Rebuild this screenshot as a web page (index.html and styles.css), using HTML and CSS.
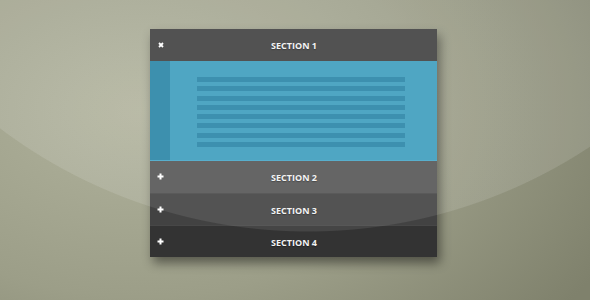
FILE: index.html
```html
<!DOCTYPE html>
<html lang="en">
<head>
  <meta charset="UTF-8">
  <title>Accordion</title>
  <link rel="stylesheet" href="styles.css">
</head>
<body>
  <div class="stage">
    <div class="accordion">
      <div class="section open">
        <div class="section-head">
          <svg class="icon" viewBox="0 0 6 6"><path d="M1 1 L5 5 M5 1 L1 5" stroke="#fff" stroke-width="1.8"/></svg>
          <span>SECTION 1</span>
        </div>
        <div class="section-body">
          <div class="strip"></div>
          <div class="lines">
            <div class="line"></div>
            <div class="line"></div>
            <div class="line"></div>
            <div class="line"></div>
            <div class="line"></div>
            <div class="line"></div>
            <div class="line"></div>
            <div class="line"></div>
          </div>
        </div>
      </div>
      <div class="section s2">
        <div class="section-head">
          <svg class="icon plus" viewBox="0 0 7 7"><path d="M3.5 0.5 V6.5 M0.5 3.5 H6.5" stroke="#fff" stroke-width="2"/></svg>
          <span>SECTION 2</span>
        </div>
      </div>
      <div class="section s3">
        <div class="section-head">
          <svg class="icon plus" viewBox="0 0 7 7"><path d="M3.5 0.5 V6.5 M0.5 3.5 H6.5" stroke="#fff" stroke-width="2"/></svg>
          <span>SECTION 3</span>
        </div>
      </div>
      <div class="section s4">
        <div class="section-head">
          <svg class="icon plus" viewBox="0 0 7 7"><path d="M3.5 0.5 V6.5 M0.5 3.5 H6.5" stroke="#fff" stroke-width="2"/></svg>
          <span>SECTION 4</span>
        </div>
      </div>
    </div>
  </div>
</body>
</html>
```

FILE: styles.css
```css
html, body {
  margin: 0;
  height: 100%;
}

body {
  font-family: 'Open Sans', 'DejaVu Sans', sans-serif;
  background:
    radial-gradient(circle 512px at 308px -280px, rgba(255,255,255,0.035) 0, rgba(255,255,255,0.035) 99.8%, rgba(255,255,255,0) 100%),
    radial-gradient(ellipse 520px 340px at 140px 110px, #b0b29c 0%, #9c9e88 55%, #7f816c 100%);
  background-color: #8c8e78;
  overflow: hidden;
}

/* glossy arc laid over the whole scene */
body::after {
  content: '';
  position: fixed;
  left: 0;
  top: 0;
  right: 0;
  bottom: 0;
  pointer-events: none;
  background: radial-gradient(circle 512px at 308px -280px, rgba(255,255,255,0.09) 0, rgba(255,255,255,0.09) 99.8%, rgba(255,255,255,0) 100%);
}

.stage {
  padding: 29px 0 0 150px;
}

.accordion {
  width: 287px;
  box-shadow: 3px 6px 10px rgba(0,0,0,0.45);
}

.section-head {
  position: relative;
  height: 32px;
  display: flex;
  align-items: center;
  justify-content: center;
  color: #f2f2f2;
  font-size: 9px;
  font-weight: bold;
  text-shadow: 0 1px 1px rgba(0,0,0,0.35);
}

.section-head span {
  margin-top: 1px;
  margin-left: 1px;
}

.icon {
  position: absolute;
  left: 8px;
  top: 13px;
  width: 6px;
  height: 6px;
}

.icon.plus {
  left: 7px;
  top: 12px;
  width: 7px;
  height: 7px;
}

.open .section-head {
  background: #414141;
}

.section-body {
  display: flex;
  height: 100px;
  background: #3e9ebe;
  border-bottom: 1px solid #48a8c8;
  box-sizing: border-box;
}

.strip {
  width: 20px;
  background: #2a85a6;
}

.lines {
  display: flex;
  flex-direction: column;
  gap: 4.3px;
  padding: 16px 0 0 27px;
}

.line {
  width: 208px;
  height: 5px;
  background: #2a85a8;
}

.s2 .section-head {
  background: #565656;
}

.s3 .section-head {
  background: #424242;
  border-top: 1px solid #4a4a4a;
  box-sizing: border-box;
}

.s4 .section-head {
  background: #333333;
  border-top: 1px solid #474747;
  box-sizing: border-box;
}
```
